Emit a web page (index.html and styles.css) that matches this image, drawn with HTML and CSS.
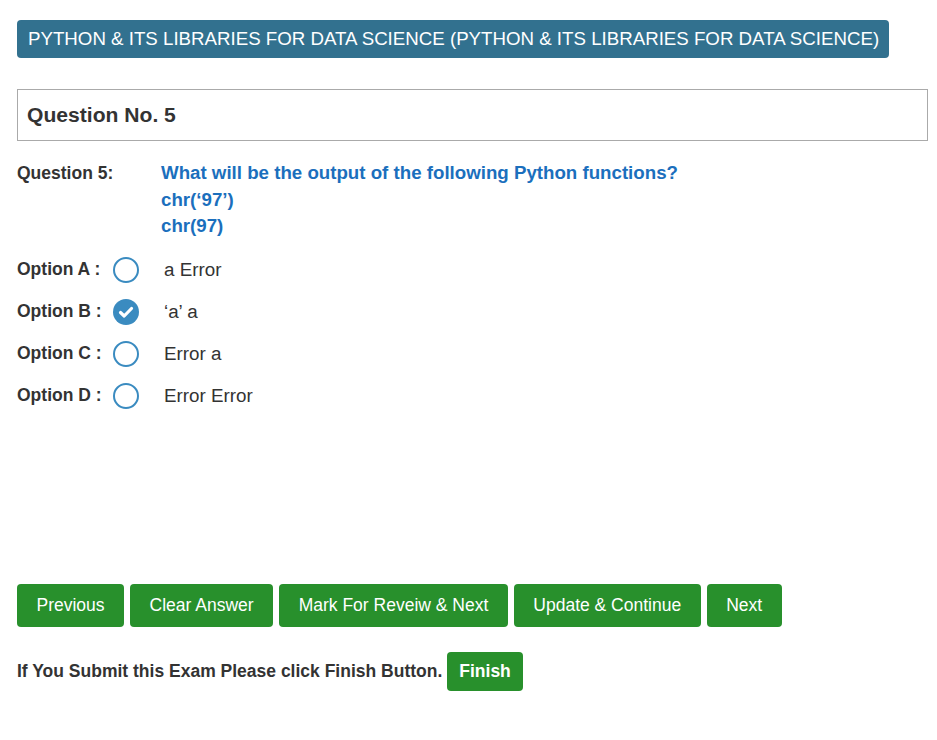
FILE: index.html
```html
<!DOCTYPE html>
<html>
<head>
<meta charset="utf-8">
<link rel="stylesheet" href="styles.css">
</head>
<body>
<div class="page">
  <div class="title-row"><div class="title">PYTHON &amp; ITS LIBRARIES FOR DATA SCIENCE (PYTHON &amp; ITS LIBRARIES FOR DATA SCIENCE)</div></div>
  <div class="qbox">Question No. 5</div>
  <div class="question">
    <div class="qlabel">Question 5:</div>
    <div class="qtext">What will be the output of the following Python functions?<br>chr(‘97’)<br>chr(97)</div>
  </div>
  <div class="options">
    <div class="opt"><span class="olabel">Option A :</span><span class="radio"></span><span class="otext">a Error</span></div>
    <div class="opt"><span class="olabel">Option B :</span><span class="radio checked"><svg viewBox="0 0 26 26" width="26" height="26"><circle cx="13" cy="13" r="13" fill="#3a8bc0"/><path d="M7.5 13.5 L11.2 17 L18.5 9.5" fill="none" stroke="#fff" stroke-width="3.2" stroke-linecap="round" stroke-linejoin="round"/></svg></span><span class="otext">‘a’ a</span></div>
    <div class="opt"><span class="olabel">Option C :</span><span class="radio"></span><span class="otext">Error a</span></div>
    <div class="opt"><span class="olabel">Option D :</span><span class="radio"></span><span class="otext">Error Error</span></div>
  </div>
  <div class="buttons">
    <button class="btn">Previous</button>
    <button class="btn">Clear Answer</button>
    <button class="btn">Mark For Reveiw &amp; Next</button>
    <button class="btn">Update &amp; Continue</button>
    <button class="btn">Next</button>
  </div>
  <div class="finish-row">
    <span class="finish-text">If You Submit this Exam Please click Finish Button.</span>
    <button class="btn finish">Finish</button>
  </div>
</div>
</body>
</html>
```
FILE: styles.css
```css
html, body { margin: 0; padding: 0; background: #fff; }
body { font-family: "Liberation Sans", Arial, sans-serif; color: #333; }
.page { padding: 20px 9px 0 17px; }
.title-row { display: flex; }
.title {
  background: #32718f;
  color: #fff;
  font-size: 18.7px;
  line-height: 38px;
  height: 38px;
  padding: 0 10px 0 11px;
  border-radius: 4px;
  white-space: nowrap;
}
.qbox {
  margin-top: 31px;
  border: 1px solid #aaa;
  height: 50px;
  line-height: 50px;
  padding-left: 9px;
  font-weight: bold;
  font-size: 21.1px;
  color: #333;
}
.question { display: flex; margin-top: 19px; }
.qlabel { width: 144px; font-weight: bold; font-size: 17.5px; line-height: 26.5px; color: #333; }
.qtext { color: #1b6fbd; font-weight: bold; font-size: 18.7px; line-height: 26.5px; }
.options { margin-top: 9px; }
.opt { display: flex; align-items: center; height: 42px; }
.olabel { width: 96px; font-weight: bold; font-size: 17.5px; color: #333; white-space: nowrap; }
.radio {
  width: 22px; height: 22px;
  border: 2px solid #3a8bc0;
  border-radius: 50%;
  margin-right: 25px;
  flex: none;
}
.radio.checked { border: none; width: 26px; height: 26px; }
.radio svg { display: block; }
.otext { font-size: 18.8px; color: #333; }
.buttons { display: flex; gap: 6px; margin-top: 167px; }
.btn {
  background: #28902c;
  color: #fff;
  border: none;
  border-radius: 4px;
  font-family: "Liberation Sans", Arial, sans-serif;
  font-size: 17.5px;
  height: 43px;
  padding: 0 19.5px;
  margin: 0;
}
.finish-row { display: flex; align-items: center; margin-top: 25px; }
.finish-text { font-weight: bold; font-size: 17.5px; color: #333; margin-right: 5px; }
.btn.finish { font-weight: bold; height: 39px; padding: 0 12px; }
```
